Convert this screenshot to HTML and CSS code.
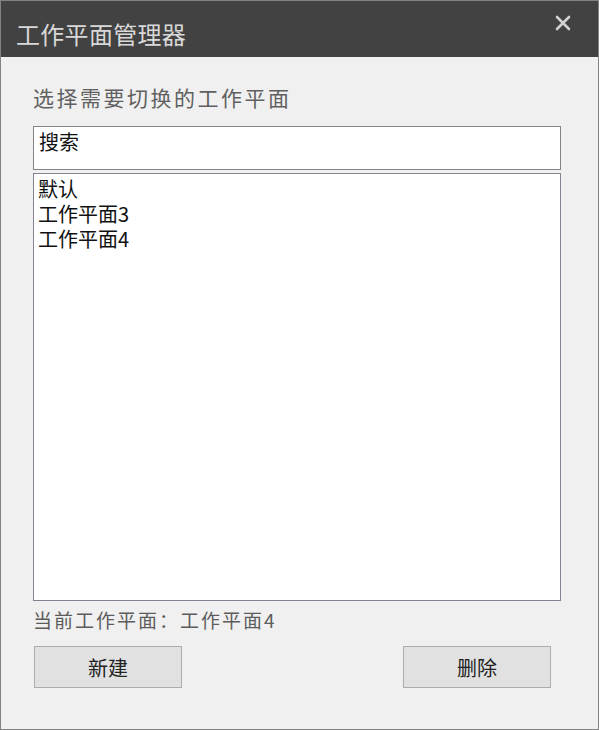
FILE: index.html
```html
<!DOCTYPE html>
<html lang="zh-CN">
<head>
<meta charset="utf-8">
<title>工作平面管理器</title>
<link rel="stylesheet" href="styles.css">
</head>
<body>
<div class="window">
  <div class="titlebar">
    <div class="title">工作平面管理器</div>
    <svg class="close" width="16" height="16" viewBox="0 0 16 16">
      <path d="M2 2 L14 14 M14 2 L2 14" stroke="#d2d2d2" stroke-width="2.6" stroke-linecap="round" fill="none"/>
    </svg>
  </div>
  <div class="content">
    <div class="label">选择需要切换的工作平面</div>
    <div class="search">搜索</div>
    <div class="list">
      <div class="item">默认</div>
      <div class="item">工作平面3</div>
      <div class="item">工作平面4</div>
    </div>
    <div class="status">当前工作平面：工作平面4</div>
    <div class="buttons">
      <div class="btn btn-left">新建</div>
      <div class="btn btn-right">删除</div>
    </div>
  </div>
</div>
</body>
</html>
```
FILE: styles.css
```css
html, body {
  margin: 0;
  padding: 0;
  background: #f0f0f0;
}
.window {
  width: 599px;
  height: 730px;
  box-sizing: border-box;
  border: 1px solid #838383;
  background: #f0f0f0;
  display: flex;
  flex-direction: column;
  font-family: "Noto Sans CJK SC", "Noto Sans", sans-serif;
}
.titlebar {
  height: 56px;
  flex: none;
  background: #424242;
  display: flex;
  justify-content: space-between;
  align-items: flex-start;
  padding: 0 27px 0 15px;
}
.title {
  margin-top: 21px;
  font-size: 24px;
  line-height: 24px;
  letter-spacing: 0.3px;
  color: #d9d9d9;
}
.close {
  margin-top: 14px;
  display: block;
}
.content {
  display: flex;
  flex-direction: column;
  padding: 0 37px 0 32px;
}
.label {
  margin-top: 28px;
  font-size: 21px;
  line-height: 24px;
  letter-spacing: 2.5px;
  color: #606060;
}
.search {
  margin-top: 17px;
  height: 44px;
  box-sizing: border-box;
  border: 1px solid #848484;
  background: #ffffff;
  padding: 3px 0 0 5px;
  font-size: 20px;
  line-height: 24px;
  color: #111;
}
.list {
  margin-top: 3px;
  height: 428px;
  box-sizing: border-box;
  border: 1px solid #848490;
  background: #ffffff;
  padding: 2px 0 0 4px;
}
.item {
  font-size: 20px;
  line-height: 25px;
  color: #111;
}
.status {
  margin-top: 7px;
  font-size: 19px;
  line-height: 24px;
  letter-spacing: 2px;
  color: #5c5c5c;
}
.buttons {
  margin-top: 14px;
  display: flex;
  justify-content: space-between;
}
.btn {
  width: 148px;
  height: 42px;
  box-sizing: border-box;
  border: 1px solid #adadad;
  background: #e1e1e1;
  display: flex;
  align-items: center;
  justify-content: center;
  font-size: 20px;
  color: #222;
}
.btn-left {
  margin-left: 1px;
}
.btn-right {
  margin-right: 10px;
}
```
